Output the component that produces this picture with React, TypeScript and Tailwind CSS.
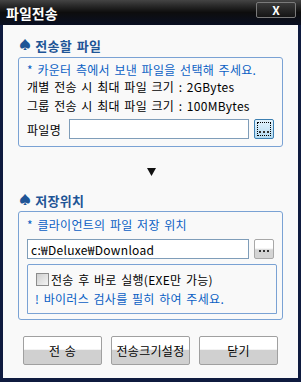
import React from "react";

const font = { fontFamily: '"Noto Sans CJK KR", "Noto Sans", sans-serif' };

function DotsButton({ focused }: { focused?: boolean }) {
    if (focused) {
        return (
            <div className="w-[20px] h-[20px] shrink-0 rounded-[2px] border border-[#3c7fb1] bg-linear-to-b from-[#e3f2fb] to-[#b5dcf3] p-[2px]">
                <div className="h-full w-full border border-dotted border-black flex items-end justify-center pb-[2px]">
                    <div className="flex gap-[2px]">
                        <span className="w-[2px] h-[2px] bg-[#333]" />
                        <span className="w-[2px] h-[2px] bg-[#333]" />
                        <span className="w-[2px] h-[2px] bg-[#333]" />
                    </div>
                </div>
            </div>
        );
    }
    return (
        <div className="w-[20px] h-[20px] shrink-0 rounded-[2px] border border-[#a8a8a8] bg-linear-to-b from-white from-45% to-[#d4d4d4] to-55% flex items-end justify-center pb-[6px]">
            <div className="flex gap-[2px]">
                <span className="w-[2px] h-[2px] bg-[#333]" />
                <span className="w-[2px] h-[2px] bg-[#333]" />
                <span className="w-[2px] h-[2px] bg-[#333]" />
            </div>
        </div>
    );
}

function Header({ title }: { title: string }) {
    return (
        <div className="h-[16px] flex items-center pl-[16px] gap-[4px] text-[#1f5596] font-bold text-[13px] leading-none">
            <span className="text-[12px]">♠</span>
            <span>{title}</span>
        </div>
    );
}

function Button({ label }: { label: string }) {
    return (
        <div className="w-[79px] h-[29px] rounded-[2px] border border-[#a0a0a0] bg-linear-to-b from-white from-45% to-[#d0d0d0] to-50% flex items-center justify-center text-[12px] text-black leading-none tracking-[0.3px]">
            {label}
        </div>
    );
}

export default function App() {
    return (
        <div className="w-[301px] h-[382px] bg-[#0f1b3f] flex flex-col" style={font}>
            {/* title bar */}
            <div className="h-[25px] shrink-0 bg-linear-to-b from-[#444] via-[#0d0d0d] to-[#0a0f22] flex items-center justify-between pl-[6px] pr-[5px]">
                <span className="text-white font-bold text-[14px] leading-none">파일전송</span>
                <div className="w-[40px] h-[16px] -mt-[6px] rounded-[2px] border border-[#7a7a7a] bg-linear-to-b from-[#3a3a3a] to-[#151515] flex items-center justify-center text-white font-bold text-[12px] leading-none">
                    X
                </div>
            </div>

            {/* content */}
            <div className="flex-1 mx-[3px] mb-[4px] bg-[#f9f9f9] flex flex-col text-[12px] leading-[17px] text-black tracking-[0.3px] [word-spacing:1.5px]">
                <div className="mt-[12px]">
                    <Header title="전송할 파일" />
                </div>

                <div className="mt-[4px] mx-[15px] h-[90px] rounded-[3px] border border-[#7aa2d4] px-[8px] flex flex-col">
                    <div className="mt-[3px] h-[17px] text-[#0a5fc4]">* 카운터 측에서 보낸 파일을 선택해 주세요.</div>
                    <div className="h-[17px]">개별 전송 시 최대 파일 크기 : 2GBytes</div>
                    <div className="mt-[2px] h-[17px]">그룹 전송 시 최대 파일 크기 : 100MBytes</div>
                    <div className="mt-[5px] flex items-center">
                        <span className="w-[42px] shrink-0">파일명</span>
                        <div className="w-[180px] h-[20px] border border-[#7f9db9] bg-white" />
                        <div className="ml-[5px]">
                            <DotsButton focused />
                        </div>
                    </div>
                </div>

                <div className="mt-[21px] flex justify-center pl-[2px]">
                    <svg width="9" height="8" viewBox="0 0 9 8">
                        <path d="M0 0 H9 L4.5 8 Z" fill="#111" />
                    </svg>
                </div>

                <div className="mt-[16px]">
                    <Header title="저장위치" />
                </div>

                <div className="mt-[3px] mx-[15px] h-[109px] rounded-[3px] border border-[#7aa2d4] pl-[8px] flex flex-col">
                    <div className="mt-[4px] h-[17px] text-[#0a5fc4]">* 클라이언트의 파일 저장 위치</div>
                    <div className="mt-[6px] flex items-center">
                        <div className="w-[222px] h-[20px] border border-[#7f9db9] bg-white flex items-center pl-[3px]">
                            c:₩Deluxe₩Download
                        </div>
                        <div className="ml-[5px]">
                            <DotsButton />
                        </div>
                    </div>
                    <div className="mt-[5px] w-[250px] h-[50px] rounded-t-[2px] border border-[#7aa2d4] flex flex-col pl-[8px]">
                        <div className="mt-[6px] h-[17px] flex items-center gap-[2px]">
                            <span className="w-[13px] h-[13px] border border-[#8c8c8c] bg-linear-to-br from-[#cfcfcf] to-[#f4f4f4]" />
                            <span>전송 후 바로 실행(EXE만 가능)</span>
                        </div>
                        <div className="mt-[2px] h-[17px] text-[#0a5fc4] -ml-[1px]">! 바이러스 검사를 필히 하여 주세요.</div>
                    </div>
                </div>

                <div className="mt-[16px] flex pl-[20px] gap-[9px]">
                    <Button label="전 송" />
                    <Button label="전송크기설정" />
                    <Button label="닫기" />
                </div>
            </div>
        </div>
    );
}
